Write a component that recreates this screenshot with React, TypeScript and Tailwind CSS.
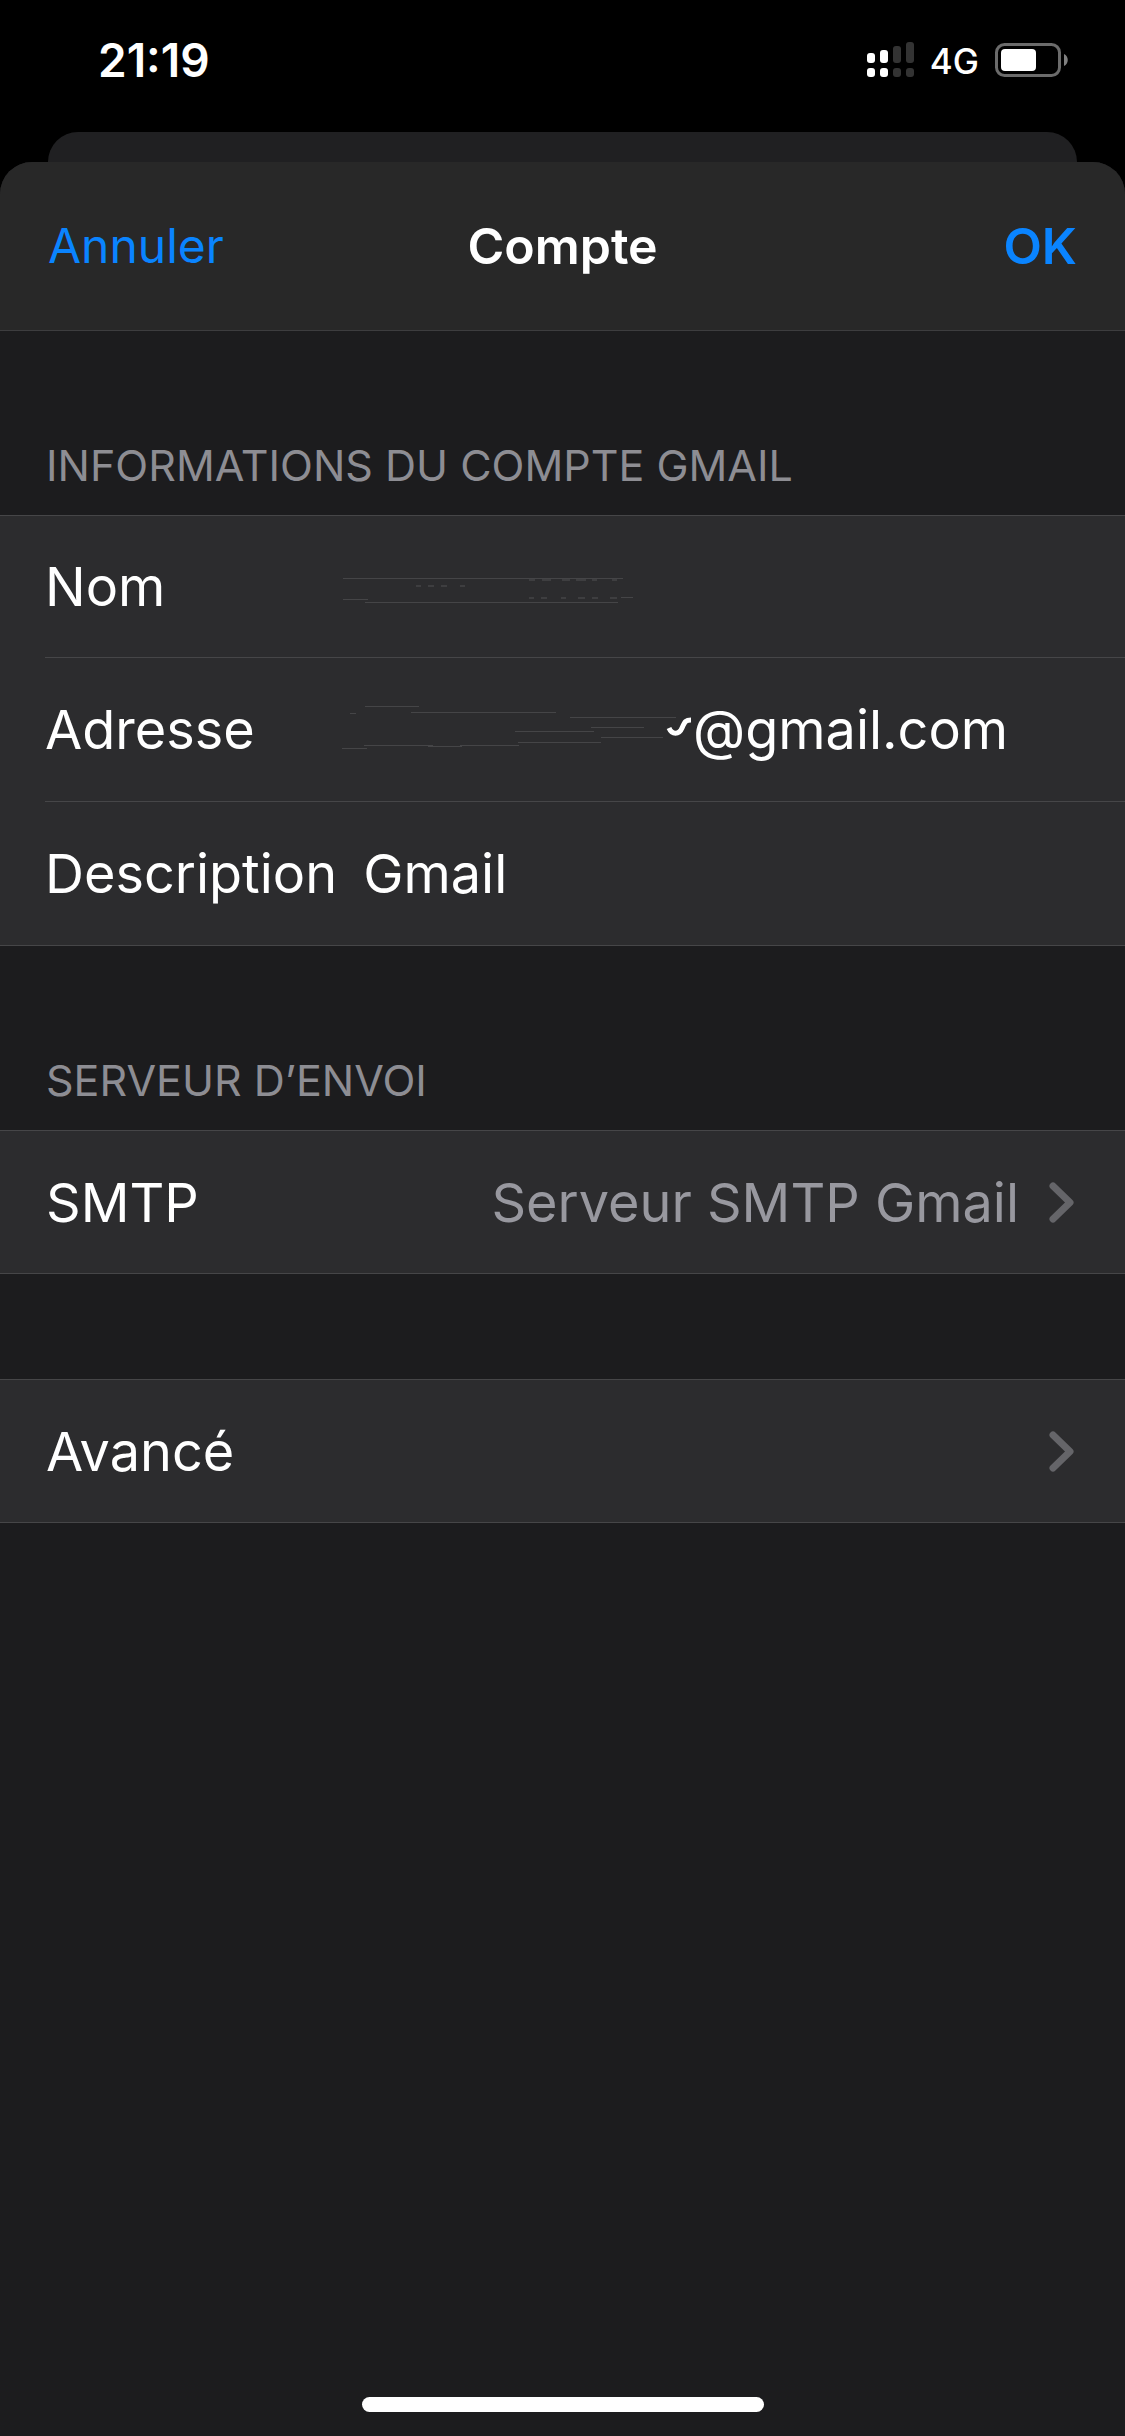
import type React from "react"

interface SectionProps {
  title?: string
  children: React.ReactNode
}

interface LinkRowProps {
  label: string
  value?: string
}

const StatusBar: React.FC = () => {
  return (
    <div className="flex h-[132px] items-start justify-between pl-[98px] pr-[57px] pt-[34px]">
      <span className="text-[46px] font-semibold leading-[52px]">21:19</span>
      <div className="flex h-[52px] items-center gap-4">
        <svg width="48" height="36" viewBox="0 0 48 36" aria-hidden="true">
          <g fill="#fff">
            <rect x="1" y="11" width="8" height="10" rx="3" />
            <rect x="14" y="8" width="8" height="13" rx="3" />
            <rect x="1" y="26" width="8" height="9" rx="3" />
            <rect x="14" y="26" width="8" height="9" rx="3" />
          </g>
          <g fill="#333">
            <rect x="27" y="4" width="8" height="17" rx="3" />
            <rect x="40" y="0" width="8" height="21" rx="3" />
            <rect x="27" y="26" width="8" height="9" rx="3" />
            <rect x="40" y="26" width="8" height="9" rx="3" />
          </g>
        </svg>
        <span className="pt-[2px] text-[35px] font-medium leading-[52px]">4G</span>
        <svg width="73" height="34" viewBox="0 0 73 34" aria-hidden="true">
          <rect x="1.5" y="1.5" width="63" height="31" rx="8" fill="none" stroke="#6b6b6b" strokeWidth="3" />
          <rect x="6" y="6" width="35" height="22" rx="4" fill="#fff" />
          <path d="M69 11c5 2 5 10 0 12z" fill="#808080" />
        </svg>
      </div>
    </div>
  )
}

const Chevron: React.FC = () => {
  return (
    <svg width="25" height="41" viewBox="0 0 25 41" fill="none" aria-hidden="true">
      <path d="M4 4L21 20.5L4 37" stroke="#656569" strokeWidth="7" strokeLinecap="round" strokeLinejoin="round" />
    </svg>
  )
}

const NameMarks: React.FC = () => {
  return (
    <svg
      className="pointer-events-none absolute left-0 top-1/2 -translate-y-1/2"
      width="300"
      height="40"
      viewBox="0 0 300 40"
      fill="none"
      stroke="#454547"
      aria-hidden="true"
    >
      <path d="M3 11.5H283M3 32.5H28M25 35.5H278M281 30.5H293" />
      <path
        d="M76 19h5M88 19h6M101 19h6M120 19h5M189 13h6M202 13h9M222 13h8M236 13h10M252 13h5M272 13h5M189 31h5M201 31h6M221 31h5M238 31h7M252 31h6M270 31h7"
        strokeWidth="2"
        stroke="#3e3e40"
      />
    </svg>
  )
}

const AddressMarks: React.FC = () => {
  return (
    <svg
      className="shrink-0"
      width="353"
      height="60"
      viewBox="0 0 353 60"
      fill="none"
      stroke="#454547"
      aria-hidden="true"
    >
      <path d="M25 6.5H79M10 13.5H16M71 12.5H216M230 17.5H336M251 27.5H304M175 31.5H254M261 37.5H323M178 42.5H261M24 45.5H93M88 46.5H122M120 45.5H179M2 48.5H27" />
      <path d="M329 28c3 7 10 7 13 0s4-8 9-8" stroke="#fff" strokeWidth="5" />
    </svg>
  )
}

const Section: React.FC<SectionProps> = ({ title, children }) => {
  return (
    <section>
      {title && (
        <h2 className="px-[46px] pb-[24px] pt-[108px] text-[43px] leading-[52px] text-[#8d8d93]">{title}</h2>
      )}
      <div className="border-y border-[#464648] bg-[#2c2c2e]">{children}</div>
    </section>
  )
}

const LinkRow: React.FC<LinkRowProps> = ({ label, value }) => {
  return (
    <button type="button" className="flex h-[142px] w-full items-center pl-[46px] pr-[51px] text-left">
      <span className="flex-1">{label}</span>
      {value && <span className="mr-[30px] text-[#98989f]">{value}</span>}
      <Chevron />
    </button>
  )
}

const App: React.FC = () => {
  return (
    <div className="flex min-h-screen flex-col bg-black font-['Inter','Liberation_Sans',sans-serif] text-white">
      <StatusBar />
      <div className="mx-[48px] h-[30px] rounded-t-[30px] bg-[#202022]" />

      <main className="flex flex-1 flex-col overflow-hidden rounded-t-[32px] bg-[#1c1c1e]">
        <header className="grid h-[169px] grid-cols-3 items-center border-b border-[#3d3d3f] bg-[#282828] px-[48px] text-[50px]">
          <button type="button" className="justify-self-start text-[48px] text-[#0a84ff]">
            Annuler
          </button>
          <h1 className="text-center font-semibold">Compte</h1>
          <button type="button" className="justify-self-end font-semibold text-[#0a84ff]">
            OK
          </button>
        </header>

        <form className="flex flex-col text-[54px]">
          <Section title="INFORMATIONS DU COMPTE GMAIL">
            <div className="pl-[45px]">
              <div className="flex h-[141px] items-center">
                <label htmlFor="name" className="w-[295px] shrink-0">
                  Nom
                </label>
                <div className="relative flex-1">
                  <input id="name" type="text" className="w-full bg-transparent outline-none" />
                  <NameMarks />
                </div>
              </div>
              <div className="flex h-[144px] items-center border-t border-[#464648]">
                <label htmlFor="address" className="w-[295px] shrink-0">
                  Adresse
                </label>
                <AddressMarks />
                <input
                  id="address"
                  type="text"
                  defaultValue="@gmail.com"
                  className="min-w-0 flex-1 bg-transparent outline-none"
                />
              </div>
              <div className="flex h-[144px] items-center gap-[26px] border-t border-[#464648]">
                <label htmlFor="description" className="shrink-0">
                  Description
                </label>
                <input
                  id="description"
                  type="text"
                  defaultValue="Gmail"
                  className="min-w-0 flex-1 bg-transparent outline-none"
                />
              </div>
            </div>
          </Section>

          <Section title="SERVEUR D’ENVOI">
            <LinkRow label="SMTP" value="Serveur SMTP Gmail" />
          </Section>

          <div className="mt-[105px]">
            <Section>
              <LinkRow label="Avancé" />
            </Section>
          </div>
        </form>

        <div className="mx-auto mb-6 mt-auto h-[15px] w-[402px] rounded-full bg-white" />
      </main>
    </div>
  )
}

export default App
